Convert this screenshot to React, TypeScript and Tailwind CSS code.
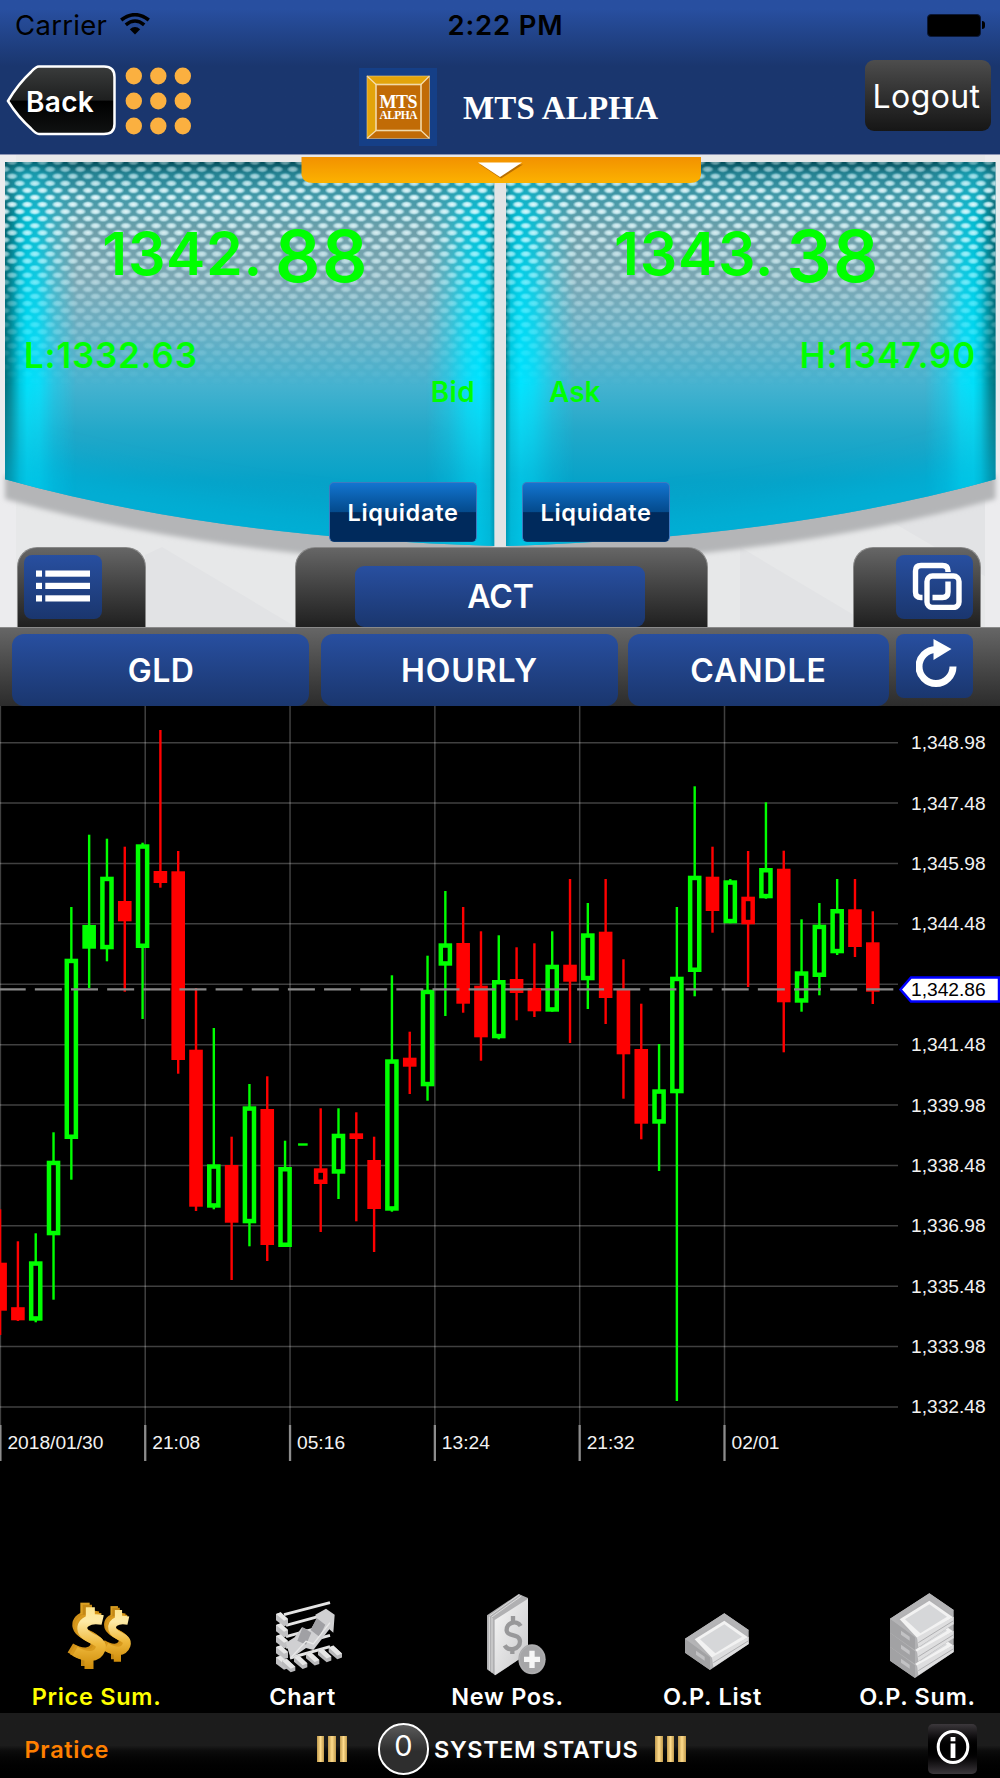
import type { ReactNode } from 'react'

type Candle = {
  high: number
  top: number
  bottom: number
  low: number
  up: boolean
  hollow: boolean
}

const STEP = 17.81
const CHART_TOP = 706

// high, top, bottom, low, kind (G/R = hollow, g/r = filled)
const raw: [number, number, number, number, string][] = [
  [1209.3, 1262.7, 1310.7, 1335, 'r'],
  [1241.3, 1307.2, 1320.3, 1321, 'r'],
  [1233.3, 1261.3, 1320.7, 1322.3, 'G'],
  [1132.3, 1160.7, 1235.3, 1299.7, 'G'],
  [907, 958.7, 1139, 1179.7, 'G'],
  [834.7, 925, 948.7, 988, 'g'],
  [838.7, 876.7, 949.3, 961.3, 'G'],
  [846.7, 901, 921.3, 991.7, 'r'],
  [842.7, 844.3, 948, 1019, 'G'],
  [730, 871, 883, 887.7, 'r'],
  [851, 871.3, 1060, 1073.7, 'r'],
  [988, 1049.7, 1206.7, 1211, 'r'],
  [1028, 1164.3, 1207.7, 1209.3, 'G'],
  [1136.7, 1165, 1222.7, 1280, 'r'],
  [1084, 1106.3, 1223.3, 1246.3, 'G'],
  [1076.3, 1109, 1245, 1261, 'r'],
  [1140.7, 1167, 1247, 1247, 'G'],
  [1144.5, 1144.5, 1144.5, 1144.5, 'g'],
  [1108.3, 1168.3, 1184, 1232, 'R'],
  [1108.3, 1133.7, 1173.7, 1199, 'G'],
  [1112.3, 1133.3, 1139, 1221.3, 'r'],
  [1136.7, 1160, 1209, 1252, 'r'],
  [975.3, 1059.3, 1210.7, 1211.7, 'G'],
  [1031.7, 1057.7, 1066.7, 1094, 'r'],
  [955.7, 989.7, 1086.3, 1100.7, 'G'],
  [891, 943.3, 965.7, 1016, 'G'],
  [907, 943, 1003.7, 1012.7, 'r'],
  [931.3, 985.7, 1037.3, 1060.7, 'r'],
  [935.3, 980, 1038.3, 1039.3, 'G'],
  [947.3, 979, 993, 1020.3, 'r'],
  [943.3, 988, 1011.3, 1017, 'r'],
  [931.3, 964.7, 1011.7, 1011.7, 'G'],
  [879, 964.7, 981.7, 1043, 'r'],
  [903, 933.3, 980.3, 1009, 'G'],
  [879, 931.7, 998, 1024, 'r'],
  [959.3, 989.3, 1054.3, 1098.7, 'r'],
  [1003.7, 1049, 1123.7, 1139.3, 'r'],
  [1044, 1089.3, 1123.7, 1171, 'G'],
  [907, 976.7, 1093.3, 1401, 'G'],
  [786.3, 875.7, 972, 996.3, 'G'],
  [846.7, 876.7, 911, 932.7, 'r'],
  [879, 880.3, 923.3, 923.3, 'G'],
  [851, 896.7, 924.3, 987, 'R'],
  [802.3, 868, 898.3, 898.7, 'G'],
  [850.7, 868.7, 1002.3, 1052.3, 'r'],
  [919.3, 971.3, 1002.7, 1011.7, 'G'],
  [903, 924.7, 977, 995.3, 'G'],
  [879, 909, 953.3, 955, 'G'],
  [879, 909.3, 947, 957, 'r'],
  [911.3, 942.3, 991.7, 1004, 'r'],
]

const candles: Candle[] = raw.map(([high, top, bottom, low, kind]) => ({
  high: high - CHART_TOP,
  top: top - CHART_TOP,
  bottom: bottom - CHART_TOP,
  low: low - CHART_TOP,
  up: kind.toLowerCase() === 'g',
  hollow: kind === kind.toUpperCase(),
}))

const priceLabels = [
  '1,348.98', '1,347.48', '1,345.98', '1,344.48', '', '1,341.48',
  '1,339.98', '1,338.48', '1,336.98', '1,335.48', '1,333.98', '1,332.48',
]

const timeLabels = ['2018/01/30', '21:08', '05:16', '13:24', '21:32', '02/01']

const PANEL = 'M5 7 H494.5 V391 Q213 382.5 5 324.3 Z'

function BlueButton({ className, children }: { className: string; children?: ReactNode }) {
  return (
    <button
      className={`flex shrink-0 items-center justify-center bg-linear-to-b from-[#284fa0] to-[#1a366e] text-[32px] font-semibold text-white ${className}`}
    >
      {children}
    </button>
  )
}

function StatusBar() {
  return (
    <div className="flex h-[50px] items-center justify-between pl-[15px] pr-[15px] text-[27.5px] leading-[50px] text-black">
      <div className="flex w-[300px] items-center gap-[13px]">
        <span className="tracking-[0.3px]">Carrier</span>
        <svg width="30" height="22" viewBox="0 0 30 22" className="-mt-0.5">
          <path d="M15 21.5 L9.8 16.2 Q15 11.8 20.2 16.2 Z" />
          <path d="M5.8 11.8 Q15 4.2 24.2 11.8" fill="none" stroke="#000" strokeWidth="3.6" />
          <path d="M1.2 7 Q15 -3.6 28.8 7" fill="none" stroke="#000" strokeWidth="3.6" />
        </svg>
      </div>
      <span className="ml-[11px] font-semibold tracking-[0.8px]">2:22 PM</span>
      <div className="flex w-[300px] items-center justify-end gap-[1.5px]">
        <div className="h-[23px] w-[54px] rounded-[4px] border border-[#0a1838] bg-black" />
        <div className="h-2 w-[3px] rounded-r-full bg-black" />
      </div>
    </div>
  )
}

function Header() {
  return (
    <header className="h-[155px] border-b border-[#8c95b5] bg-linear-to-b from-[#284fa0] from-[6%] to-[#1a366e] to-[43%]">
      <StatusBar />
      <div className="flex h-[104px] items-start">
        <div className="relative ml-[6px] mt-[15px] h-[71px] w-[110px]">
          <svg width="110" height="71" viewBox="0 0 110 71" className="absolute inset-0">
            <defs>
              <linearGradient id="back" x1="0" y1="0" x2="0" y2="1">
                <stop offset="0" stopColor="#3a3c3c" />
                <stop offset="0.5" stopColor="#1e1f1f" />
                <stop offset="0.51" stopColor="#000" />
                <stop offset="1" stopColor="#101212" />
              </linearGradient>
            </defs>
            <path
              d="M33 1.5 H98 Q108.500 1.5 108.500 12 V59 Q108.500 69 98 69 H33 Q30 69 25 63.5 Q12 52 2 36 Q12 19 25 7 Q30 1.5 33 1.5 Z"
              fill="url(#back)"
              stroke="#fff"
              strokeWidth="2.5"
            />
          </svg>
          <span className="relative block pl-[20px] text-[28px] font-semibold leading-[74px] tracking-[0.3px] text-white">Back</span>
        </div>
        <svg width="66" height="70" viewBox="0 0 66 70" className="ml-[9px] mt-4">
          {[10, 35, 60].map((y) => [8, 32.5, 57].map((x) => (
            <ellipse key={`${x}-${y}`} cx={x + 0.8} cy={y} rx="8.2" ry="8.4" fill="#fbb040" />
          )))}
        </svg>
        <svg width="78" height="78" viewBox="0 0 78 78" className="ml-[168px] mt-[18px]">
          <rect width="78" height="78" fill="#153f87" />
          <rect x="8" y="8" width="62.5" height="62.5" fill="#c16b06" />
          <path d="M8 70.5 V8 H70.5 L62 16.5 H17 V62 Z" fill="#e3a40b" />
          <rect x="17" y="16.5" width="45" height="46" fill="#c16b06" stroke="#f2d9a8" strokeWidth="1.6" />
          <path d="M8 8 L17 16.5 M70.5 8 L62 16.5 M8 70.5 L17 62.5 M70.5 70.5 L62 62.5" stroke="#f5deb0" strokeWidth="1.2" />
          <rect x="8" y="8" width="62.5" height="62.5" fill="none" stroke="#e6c98e" strokeWidth="0.6" />
          <text x="39.5" y="39.5" textAnchor="middle" textLength="38" className="fill-white font-['Liberation_Serif',serif] text-[18px] font-bold">MTS</text>
          <text x="39.5" y="51" textAnchor="middle" textLength="38" className="fill-white font-['Liberation_Serif',serif] text-[11.5px] font-bold">ALPHA</text>
        </svg>
        <h1 className="ml-[26px] mt-[36px] w-[200px] whitespace-nowrap font-['Liberation_Serif',serif] text-[33px] font-bold leading-[44px] tracking-[0.2px] text-white">
          MTS ALPHA
        </h1>
        <button className="ml-auto mr-[9.5px] mt-[10px] h-[71px] w-[126px] rounded-[9px] bg-linear-to-b from-[#4d4d4d] to-[#161616] pr-[2px] pt-[2px] text-[32px] tracking-[0.4px] text-white">
          Logout
        </button>
      </div>
    </header>
  )
}

function QuoteBackdrop() {
  return (
    <svg width="1000" height="472" viewBox="0 0 1000 472" className="absolute inset-0">
      <defs>
        <linearGradient id="base" gradientUnits="userSpaceOnUse" x1="0" y1="7" x2="0" y2="392">
          <stop offset="0" stopColor="#06525e" />
          <stop offset="0.03" stopColor="#2a8fa0" />
          <stop offset="0.09" stopColor="#58b8c8" />
          <stop offset="0.18" stopColor="#88b8c2" />
          <stop offset="0.3" stopColor="#8cb6c2" />
          <stop offset="0.45" stopColor="#6cb5ca" />
          <stop offset="0.57" stopColor="#48b3d0" />
          <stop offset="0.7" stopColor="#22a8c9" />
          <stop offset="0.83" stopColor="#06a2c8" />
          <stop offset="1" stopColor="#00a6cc" />
        </linearGradient>
        <linearGradient id="glow" x1="0" y1="0" x2="1" y2="0">
          <stop offset="0" stopColor="#00707c" />
          <stop offset="0.012" stopColor="#008c9a" />
          <stop offset="0.03" stopColor="#00c8e0" />
          <stop offset="0.045" stopColor="#00e0fa" />
          <stop offset="0.07" stopColor="#00e4ff" stopOpacity="0.85" />
          <stop offset="0.1" stopColor="#00e0ff" stopOpacity="0.4" />
          <stop offset="0.145" stopColor="#00e0ff" stopOpacity="0" />
          <stop offset="0.86" stopColor="#00e0ff" stopOpacity="0" />
          <stop offset="0.905" stopColor="#00e4ff" stopOpacity="0.35" />
          <stop offset="0.945" stopColor="#00e4ff" stopOpacity="0.85" />
          <stop offset="0.97" stopColor="#00e4ff" />
          <stop offset="0.99" stopColor="#00d0e8" />
          <stop offset="1" stopColor="#00808c" />
        </linearGradient>
        <linearGradient id="fade" gradientUnits="userSpaceOnUse" x1="0" y1="7" x2="0" y2="392">
          <stop offset="0" stopColor="#fff" stopOpacity="0.2" />
          <stop offset="0.14" stopColor="#fff" stopOpacity="0.95" />
          <stop offset="0.57" stopColor="#fff" />
          <stop offset="0.8" stopColor="#fff" stopOpacity="0.5" />
          <stop offset="1" stopColor="#fff" stopOpacity="0.35" />
        </linearGradient>
        <linearGradient id="dotFade" gradientUnits="userSpaceOnUse" x1="0" y1="7" x2="0" y2="232">
          <stop offset="0" stopColor="#fff" stopOpacity="0.45" />
          <stop offset="0.15" stopColor="#fff" />
          <stop offset="0.35" stopColor="#fff" stopOpacity="0.75" />
          <stop offset="0.6" stopColor="#fff" stopOpacity="0.35" />
          <stop offset="1" stopColor="#fff" stopOpacity="0" />
        </linearGradient>
        <radialGradient id="dot">
          <stop offset="0" stopColor="#f2feff" />
          <stop offset="0.55" stopColor="#e4fbff" stopOpacity="0.8" />
          <stop offset="1" stopColor="#d8f8ff" stopOpacity="0" />
        </radialGradient>
        <pattern id="dots" width="15.17" height="14.14" x="4.5" y="3.6" patternUnits="userSpaceOnUse">
          <rect width="15.17" height="14.14" fill="#063a46" fillOpacity="0.24" />
          <g fill="url(#dot)">
            <ellipse cx="7.6" cy="3.5" rx="6.2" ry="3.5" />
            <ellipse cx="0" cy="10.6" rx="6.2" ry="3.5" />
            <ellipse cx="15.17" cy="10.6" rx="6.2" ry="3.5" />
          </g>
        </pattern>
        <mask id="fadeMask"><rect width="1000" height="472" fill="url(#fade)" /></mask>
        <mask id="dotMask"><rect width="1000" height="472" fill="url(#dotFade)" /></mask>
        <clipPath id="panelClip"><path d={PANEL} /></clipPath>
        <filter id="soft"><feGaussianBlur stdDeviation="2.5" /></filter>
        <filter id="wide" x="-20%" y="-60%" width="140%" height="220%"><feGaussianBlur stdDeviation="16" /></filter>
        <g id="panel">
          <path d="M5 320 V344 Q213 402 494 412 V380 Z" fill="#b4b5b7" filter="url(#soft)" />
          <path d={PANEL} fill="url(#base)" />
          <g clipPath="url(#panelClip)">
            <path d="M-10 318 Q213 384 500 398" fill="none" stroke="#00b4da" strokeWidth="48" strokeOpacity="0.7" filter="url(#wide)" />
          </g>
          <g mask="url(#fadeMask)"><path d={PANEL} fill="url(#glow)" /></g>
          <g mask="url(#dotMask)"><path d={PANEL} fill="url(#dots)" /></g>
        </g>
      </defs>
      <rect width="1000" height="472" fill="#e7e8e9" />
      <path d="M162 392 L296 472 H145 V400 Z M740 392 L874 472 H740 Z M880 360 L1000 330 V430 Z" fill="#e2e3e5" />
      <path d="M0 0 H16 V472 H0 Z M985 0 H1000 V472 H985 Z" fill="#ececee" />
      <use href="#panel" />
      <use href="#panel" transform="matrix(-1 0 0 1 1000.5 0)" />
      <rect x="494.500" y="7" width="11.500" height="387" fill="#e2e4e5" />
    </svg>
  )
}

function Quote({ side, whole, pips, range, rangeClass, label }: {
  side: 'left' | 'right'
  whole: string
  pips: string
  range: string
  rangeClass: string
  label: string
}) {
  const left = side === 'left'
  return (
    <div className={`flex w-[500px] flex-col text-[#00ff00] ${left ? 'items-end' : 'items-start'}`}>
      <div className={`mt-[69px] flex h-[60px] items-center whitespace-nowrap font-semibold ${left ? 'pr-[131px]' : 'self-end pr-[120px]'}`}>
        <span className="text-[59px] leading-[60px] tracking-[0.7px]">{whole}</span>
        <span className="ml-[12px] mt-[3px] text-[71px] leading-[60px] tracking-[1.5px]">{pips}</span>
      </div>
      <div className={`mt-[51px] text-[35px] font-semibold leading-[40px] tracking-[0.75px] ${rangeClass}`}>{range}</div>
      <div className={`mt-[2px] text-[28px] font-semibold leading-[30px] ${left ? 'pr-[25px] tracking-[0.3px]' : 'pl-[49px]'}`}>{label}</div>
      <button
        className={`mt-[75px] h-[60px] w-[148px] rounded-[5px] border border-[#3f79c0] border-b-[#0a3a70] bg-linear-to-b from-[#1375d0] via-[#044a8c] via-50% to-[#002a5c] to-51% pt-[2px] text-[23.5px] font-semibold tracking-[0.7px] text-white ${left ? 'mr-[23px]' : 'ml-[22px]'}`}
      >
        Liquidate
      </button>
    </div>
  )
}

function QuoteSection() {
  return (
    <section className="relative h-[472px] overflow-hidden">
      <QuoteBackdrop />
      <svg width="400" height="28" viewBox="0 0 400 28" className="absolute left-[301px] top-[1px]">
        <defs>
          <linearGradient id="orange" x1="0" y1="0" x2="0" y2="1">
            <stop offset="0" stopColor="#f29100" />
            <stop offset="1" stopColor="#fcb200" />
          </linearGradient>
        </defs>
        <path d="M0.5 1 H400 V19 Q399 27 389 27 H12 Q2 27 0.5 19 Z" fill="url(#orange)" />
        <path d="M179 8.500 H222 L200 22.500 Z" fill="#b86e00" />
        <path d="M177 6.500 H221 L199 21 Z" fill="#fff" />
      </svg>
      <div className="relative flex">
        <Quote side="left" whole="1342." pips="88" range="L:1332.63" rangeClass="self-start pl-[24px]" label="Bid" />
        <Quote side="right" whole="1343." pips="38" range="H:1347.90" rangeClass="self-end pr-[24px]" label="Ask" />
      </div>
      <div className="relative mt-[5px] flex h-[80px] justify-between pl-[17px] pr-[19px]">
        <div className="h-[80px] w-[129px] rounded-t-[20px] border-x border-t border-[#888] bg-linear-to-b from-[#666] to-[#202020] pl-[6px] pt-[7px]">
          <BlueButton className="h-[64px] w-[78px] rounded-[8px] pb-[2px]">
            <svg width="54" height="32" viewBox="0 0 54 32" fill="#fff">
              {[0.5, 12.8, 25.3].map((y) => (
                <g key={y}>
                  <rect y={y} width="6" height="6.2" />
                  <rect x="9.3" y={y} width="44.7" height="6.2" />
                </g>
              ))}
            </svg>
          </BlueButton>
        </div>
        <div className="ml-[3px] flex h-[80px] w-[413px] justify-center rounded-t-[20px] border-x border-t border-[#888] bg-linear-to-b from-[#666] to-[#202020] pr-[3px] pt-[18px]">
          <BlueButton className="h-[61px] w-[290px] rounded-[9px] pl-[2px]">ACT</BlueButton>
        </div>
        <div className="flex h-[80px] w-[128px] justify-end rounded-t-[20px] border-x border-t border-[#888] bg-linear-to-b from-[#666] to-[#202020] pr-[7px] pt-[7px]">
          <BlueButton className="h-[64px] w-[77px] rounded-[8px]">
            <svg width="50" height="48" viewBox="0 0 50 48" fill="none" stroke="#fff" strokeWidth="5.4" className="-mt-0.5 ml-[4px]">
              <path d="M36 10 V9 Q36 3.500 30.500 3.500 H9 Q3.500 3.500 3.500 9 V30 Q3.500 35.500 9 35.500 H10.500" />
              <path d="M20.500 35.500 H30.500 Q36 35.500 36 30 V19.500" />
              <rect x="15" y="14" width="32" height="31.500" rx="5.500" />
            </svg>
          </BlueButton>
        </div>
      </div>
    </section>
  )
}

function Toolbar() {
  return (
    <div className="flex h-[79px] items-start border-t border-[#8a8a8a] bg-linear-to-b from-[#666] to-[#2c2c2c] pl-3 pt-[6px]">
      <BlueButton className="h-[72px] w-[297px] rounded-[12px] pl-px pt-[2px] tracking-[0.4px]">GLD</BlueButton>
      <BlueButton className="ml-3 h-[72px] w-[297px] rounded-[12px] pt-[2px] tracking-[0.9px]">HOURLY</BlueButton>
      <BlueButton className="ml-[10px] h-[72px] w-[261px] rounded-[12px] pt-[2px] tracking-[0.9px]">CANDLE</BlueButton>
      <BlueButton className="ml-[7px] h-[64px] w-[77px] rounded-[8px]">
        <svg width="42" height="50" viewBox="0 0 42 50" className="-mt-1.5 ml-[4px]">
          <path d="M37 28.500 A17 17 0 1 1 20 11.500" fill="none" stroke="#fff" strokeWidth="7" />
          <path d="M17.500 1 L35.500 11 L17.500 22 Z" fill="#fff" />
        </svg>
      </BlueButton>
    </div>
  )
}

function CandleChart() {
  return (
    <svg width="1000" height="762" viewBox="0 0 1000 762" className="block shrink-0 font-['Liberation_Sans',sans-serif] text-[19.2px]">
      {priceLabels.map((label, i) => {
        const y = 36.7 + i * 60.39
        return (
          <g key={i}>
            <line x1="0" x2="898" y1={y} y2={y} stroke="#fff" strokeOpacity="0.25" strokeWidth="1.5" />
            {label && <text x="911" y={y + 6.5} fill="#f2f2f2">{label}</text>}
          </g>
        )
      })}
      {timeLabels.map((label, i) => {
        const x = 0.4 + i * 144.82
        return (
          <g key={label}>
            <line x1={x} x2={x} y1="0" y2="719" stroke="#fff" strokeOpacity="0.25" strokeWidth="1.5" />
            <line x1={x} x2={x} y1="719" y2="755" stroke="#8c8c8c" strokeWidth="2.300" />
            <text x={x + 7} y="743.300" fill="#f2f2f2">{label}</text>
          </g>
        )
      })}
      {candles.map((c, i) => {
        const x = i * STEP + 0.1
        const color = c.up ? '#00ff00' : '#ff0000'
        if (c.top === c.bottom) {
          return <rect key={i} x={x - 4.8} y={c.top - 1.2} width="9.600" height="2.400" fill={color} />
        }
        return (
          <g key={i}>
            <rect x={x - 1.2} y={c.high} width="2.400" height={c.low - c.high} fill={color} />
            <rect x={x - 6.8} y={c.top} width="13.600" height={c.bottom - c.top} fill={color} />
            {c.hollow && (
              <rect x={x - 2.3} y={c.top + 4.5} width="4.600" height={c.bottom - c.top - 9} fill="#000" />
            )}
          </g>
        )
      })}
      <line x1="0" x2="895" y1="283.300" y2="283.300" stroke="#8a8a8a" strokeWidth="2.200" strokeDasharray="27 9.150" strokeDashoffset="1.300" />
      <path d="M900.500 283.500 L911 271.500 H999 V295.500 H911 Z" fill="#fff" stroke="#0000ff" strokeWidth="2.500" />
      <text x="911" y="290" fill="#000">1,342.86</text>
    </svg>
  )
}

function PriceIcon() {
  const s = 'M305 150 C262 140 230 164 250 190 C266 210 308 210 298 238 C288 264 256 264 222 244'
  const dollar = (
    <>
      <g fill="none" strokeWidth="32">
        <path d={s} transform="translate(-14 -10)" stroke="#cf9018" />
        <path d={s} transform="translate(-7 -5)" stroke="#d99a1c" />
        <path d="M252 98 V132" strokeWidth="28" stroke="#dba022" />
        <path d="M259 104 V134 M254 254 V288" strokeWidth="28" stroke="#c48814" />
      </g>
      <g fill="none" stroke="url(#gold)" strokeWidth="30">
        <path d={s} />
        <path d="M268 112 V146 M264 254 V297" strokeWidth="27" />
      </g>
    </>
  )
  return (
    <svg width="80" height="90" viewBox="168 60 240 270">
      <defs>
        <linearGradient id="gold" gradientUnits="userSpaceOnUse" x1="0" y1="105" x2="0" y2="300">
          <stop offset="0" stopColor="#ffe68c" />
          <stop offset="0.25" stopColor="#fdeaa6" />
          <stop offset="0.6" stopColor="#efb93c" />
          <stop offset="1" stopColor="#cd8a08" />
        </linearGradient>
      </defs>
      <g transform="matrix(0.8 0 0 0.84 138 26)">{dollar}</g>
      {dollar}
    </svg>
  )
}

function ChartIcon() {
  return (
    <svg width="80" height="90" viewBox="786 60 240 270">
      <g stroke="#e4e4e4" strokeWidth="9">
        <path d="M852 134 L990 98 M858 166 L990 130 M858 200 L990 164 M858 232 L990 196 M870 264 L990 230" />
      </g>
      {[0, 33, 66, 99, 130].map((y) => (
        <g key={y}>
          <path d={`M828 ${132 + y} l14 -5 l22 20 v18 l-12 4 l-24 -18 Z`} fill="#c0c0c2" />
          <path d={`M828 ${132 + y} l14 -5 l22 20 l-12 5 Z`} fill="#e8e8e8" />
        </g>
      ))}
      {[0, 36, 72, 108, 140].map((x) => (
        <g key={x}>
          <path d={`M${846 + x} ${272 - x * 0.28} l14 -6 l26 24 v12 l-14 5 l-26 -22 Z`} fill="#b9b9bb" />
          <path d={`M${846 + x} ${272 - x * 0.28} l14 -6 l26 24 l-14 6 Z`} fill="#e6e6e6" />
        </g>
      ))}
      <path d="M858 218 L884 202 L906 172 L930 182 L950 148 L946 134 L978 116 L1004 134 L1000 188 L988 178 L940 240 L918 234 L872 266 Z" fill="#d0d0d2" />
      <path d="M908 172 L934 188 L918 224 L892 212 Z M950 144 L976 164 L958 200 L932 180 Z" fill="#a0a0a4" />
      <path d="M872 264 L918 214 L940 222 L990 158" fill="none" stroke="#e8e8e8" strokeWidth="4" />
    </svg>
  )
}

function NewPosIcon() {
  return (
    <svg width="80" height="90" viewBox="-99 60 240 270">
      <defs>
        <linearGradient id="sheet" x1="0" y1="0" x2="1" y2="1">
          <stop offset="0" stopColor="#f6f6f6" />
          <stop offset="1" stopColor="#c8c8ca" />
        </linearGradient>
      </defs>
      <path d="M-39 136 L56 72 L84 84 V250 L-14 316 L-39 298 Z" fill="#b0b0b2" />
      <path d="M-26 142 L64 78 M-32 138 L58 74 M-32 140 V302 M-24 144 V308" stroke="#dcdcdc" strokeWidth="3" />
      <path d="M-16 150 L84 86 V250 L-16 316 Z" fill="url(#sheet)" />
      <path d="M62 168 C50 148 18 158 20 182 C22 202 58 188 60 214 C60 238 26 246 14 226 M39 138 V162 M37 232 V252" fill="none" stroke="#98989a" strokeWidth="13" />
      <ellipse cx="96" cy="268" rx="41" ry="45" fill="#a6a6a8" />
      <ellipse cx="96" cy="268" rx="38" ry="42" fill="none" stroke="#b0b0b2" strokeWidth="3" />
      <path d="M96 242 V294 M72 268 H120" stroke="#f6f6f6" strokeWidth="16" />
    </svg>
  )
}

function Tray({ y = 0 }: { y?: number }) {
  return (
    <g transform={`translate(0 ${y})`}>
      <path d="M555 206 L673 130 L746 180 V222 L630 300 L555 248 Z" fill="#b2b2b4" />
      <path d="M555 206 L630 256 V300 L555 248 Z" fill="#a2a2a4" />
      <path d="M555 206 L673 130 L746 180 L736 192 L673 148 L572 208 L634 256 L630 262 Z" fill="#b4b4b6" />
      <path d="M584 208 L673 152 L744 202 L640 268 Z" fill="#f2f2f2" />
      <path d="M600 208 L673 163 L726 200 L646 250 Z" fill="#d6d7d9" />
      <path d="M636 262 L746 200 V222 L640 292 Z" fill="#dededf" />
      <path d="M640 278 L746 212" stroke="#b0b0b2" strokeWidth="3" />
      <path d="M588 242 L614 260 V272 L588 254 Z" fill="#c2c2c4" />
    </g>
  )
}

function ListIcon() {
  return (
    <svg width="80" height="90" viewBox="516 60 240 270">
      <Tray />
    </svg>
  )
}

function SumIcon() {
  return (
    <svg width="80" height="90" viewBox="516 60 240 270">
      <Tray y={24} />
      <Tray y={-18} />
      <Tray y={-60} />
    </svg>
  )
}

const tabs = [
  { label: 'Price Sum.', icon: <PriceIcon />, active: true },
  { label: 'Chart', icon: <ChartIcon /> },
  { label: 'New Pos.', icon: <NewPosIcon /> },
  { label: 'O.P. List', icon: <ListIcon /> },
  { label: 'O.P. Sum.', icon: <SumIcon /> },
]

function TabBar() {
  return (
    <nav className="ml-[-6px] mt-auto flex w-[1025px] shrink-0">
      {tabs.map((tab) => (
        <div key={tab.label} className="flex w-[205px] flex-col items-center">
          {tab.icon}
          <span className={`mt-[2px] mb-px h-[30px] whitespace-nowrap text-[23.5px] font-semibold leading-[30px] tracking-[0.7px] ${tab.active ? 'text-[#ffff00]' : 'pl-[2px] text-white'}`}>
            {tab.label}
          </span>
        </div>
      ))}
    </nav>
  )
}

function Bars() {
  return (
    <div className="flex gap-[4px]">
      {[0, 1, 2].map((i) => (
        <div key={i} className="h-[26px] w-[7.500px] bg-linear-to-r from-[#c09a4c] via-[#ffdc8c] to-[#c09a4c]" />
      ))}
    </div>
  )
}

function Footer() {
  return (
    <footer className="flex h-[65px] shrink-0 items-center bg-linear-to-b from-[#1c1c1c] from-50% via-[#0c0c0c] via-58% to-black text-[23.5px] font-medium text-white">
      <span className="w-[291px] pl-[24.5px] pt-[8px] font-semibold tracking-[0.7px] text-[#ff8000]">Pratice</span>
      <div className="ml-[25.5px] flex items-center pt-[7px]">
        <Bars />
        <div className="ml-[31px] flex h-[52px] w-[51px] items-center justify-center rounded-full border-2 border-white bg-linear-to-b from-[#5a5a5a] to-[#2e2e2e] to-55% pb-[6px] text-[29px] font-normal">
          0
        </div>
        <span className="ml-[5px] mr-[17px] mt-[2px] w-[204px] whitespace-nowrap font-semibold tracking-[0.6px]">SYSTEM STATUS</span>
        <Bars />
      </div>
      <div className="ml-auto mr-[23px] mt-[6px] flex h-[50px] w-[49px] items-center justify-center rounded-[5px] bg-linear-to-b from-[#3c383c] via-black to-[#3c383c]">
        <svg width="34" height="36" viewBox="0 0 34 36" className="-mt-1">
          <ellipse cx="17" cy="18" rx="14.800" ry="15.500" fill="none" stroke="#fff" strokeWidth="3" />
          <rect x="14.600" y="8" width="4.800" height="4.300" fill="#fff" />
          <rect x="14.600" y="14.500" width="4.800" height="14.500" fill="#fff" />
        </svg>
      </div>
    </footer>
  )
}

export default function App() {
  return (
    <div className="flex h-[1778px] w-[1000px] flex-col overflow-hidden bg-black font-[Inter,sans-serif]">
      <Header />
      <QuoteSection />
      <Toolbar />
      <CandleChart />
      <TabBar />
      <Footer />
    </div>
  )
}
